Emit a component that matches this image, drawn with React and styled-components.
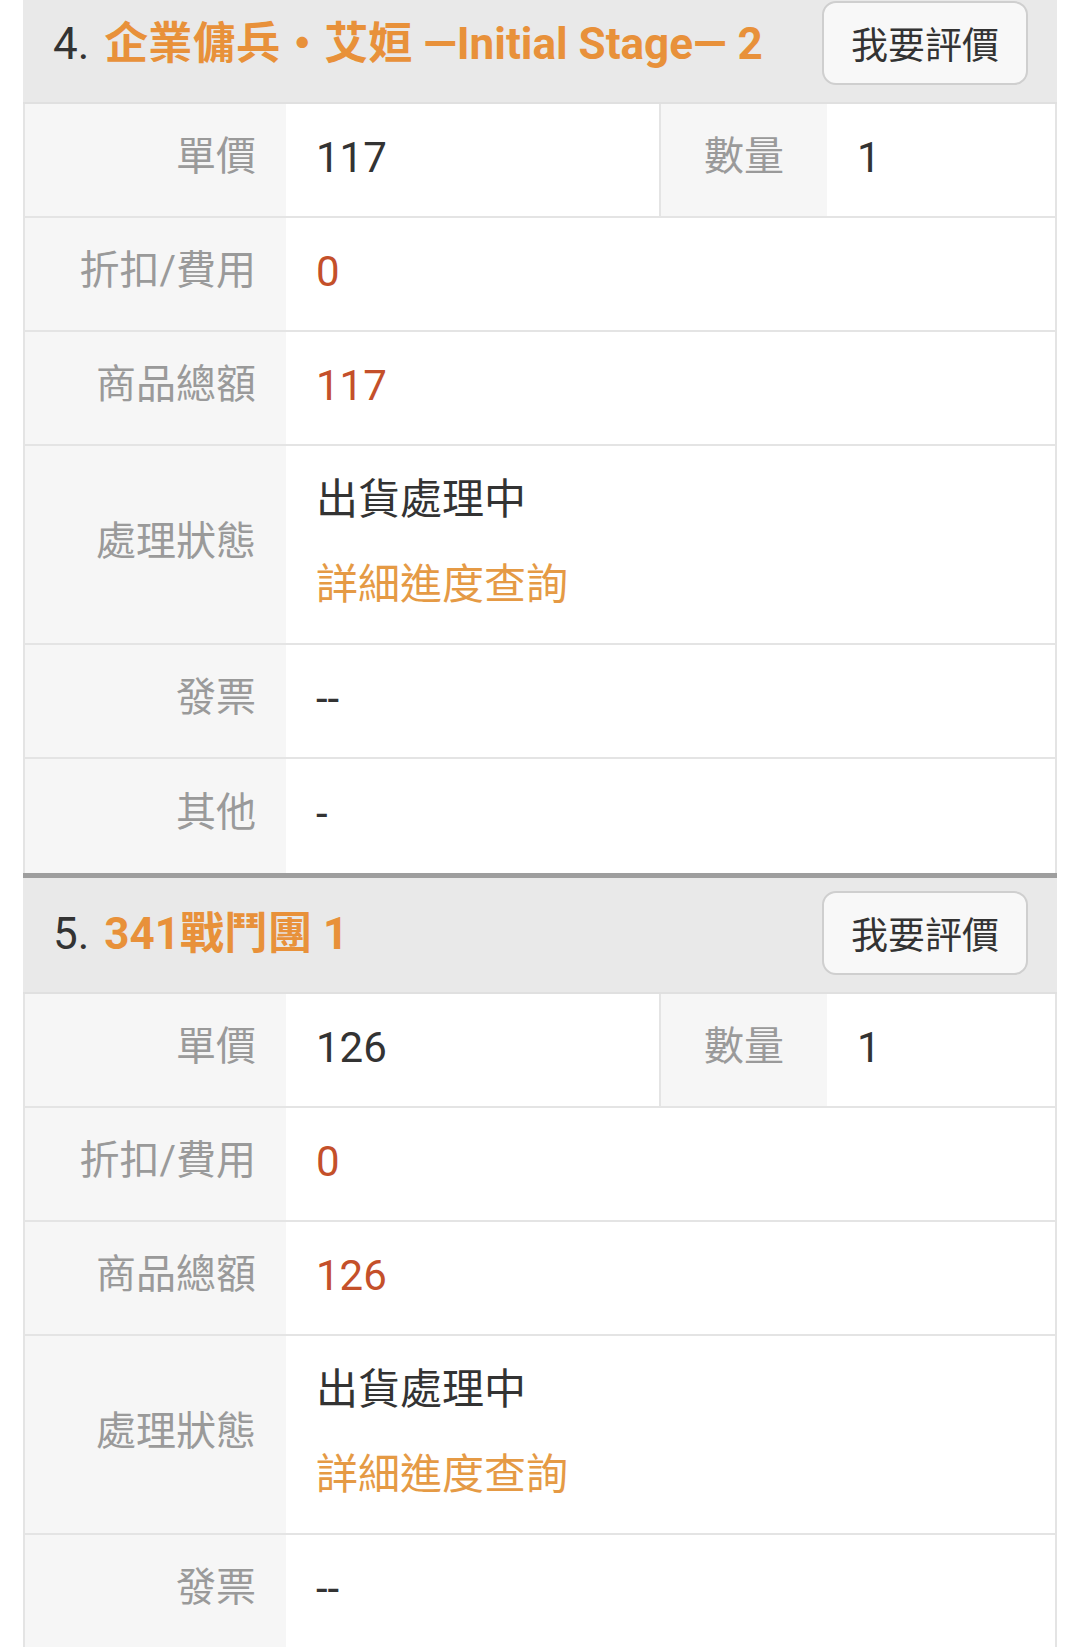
import React from 'react';
import styled, { createGlobalStyle } from 'styled-components';

const GlobalStyle = createGlobalStyle`
  html, body {
    margin: 0;
    padding: 0;
    background: #ffffff;
  }
  body {
    font-family: Roboto, "Noto Sans CJK TC", sans-serif;
    color: #333333;
    overflow: hidden;
  }
`;

const OrderList = styled.div`
  margin: -12px 23px 0;
  border-left: 2px solid #e4e4e4;
  border-right: 2px solid #e4e4e4;
`;

const Item = styled.section`
  border-top: ${(props) => (props.first ? 'none' : '5px solid #9e9e9e')};
  margin: 0 -2px;
  padding: 0 2px;
`;

const Header = styled.div`
  display: flex;
  align-items: center;
  justify-content: space-between;
  height: 114px;
  padding: 0 29px 0 30px;
  background: #e9e9e9;
  border-bottom: 2px solid #e0e0e0;
  margin: 0 -2px;
`;

const Title = styled.div`
  font-size: 44px;
  line-height: 56px;
  color: #333333;
  white-space: nowrap;
  margin-top: -2px;
`;

const Name = styled.span`
  font-weight: 700;
  color: #e8913a;
  margin-left: 4px;
`;

const RateButton = styled.button`
  width: 206px;
  height: 84px;
  border: 2px solid #cfcfcf;
  border-radius: 14px;
  background: #f8f8f8;
  color: #333333;
  font-family: Roboto, "Noto Sans CJK TC", sans-serif;
  font-size: 37px;
  padding: 0;
  margin-top: -4px;
  cursor: pointer;
`;

const Row = styled.div`
  display: grid;
  grid-template-columns: ${(props) => (props.split ? '261px 373px 168px 1fr' : '261px 1fr')};
  border-bottom: ${(props) => (props.last ? 'none' : '2px solid #e4e4e4')};
  min-height: ${(props) => (props.last ? '114px' : '112px')};
`;

const Label = styled.div`
  display: flex;
  align-items: center;
  justify-content: flex-end;
  padding: 0 ${(props) => (props.wide ? '43px' : '30px')} 6px 0;
  background: #f6f6f6;
  color: #9a9a9a;
  font-size: 40px;
  line-height: 60px;
  ${(props) => props.divided && 'border-left: 2px solid #e4e4e4;'}
`;

const Value = styled.div`
  display: flex;
  flex-direction: column;
  justify-content: center;
  gap: 25px;
  padding: 24px 30px 28px;
  font-size: 42px;
  line-height: 60px;
  color: ${(props) => (props.tone === 'red' ? '#c4502a' : '#333333')};
`;

const Link = styled.a`
  color: #e59a45;
  text-decoration: none;
`;

const orders = [
  { no: 4, name: '企業傭兵・艾姮 —Initial Stage— 2', price: 117, qty: 1, other: '-' },
  { no: 5, name: '341戰鬥團 1', price: 126, qty: 1, other: '-' },
];

function OrderItem({ order, first }) {
  return (
    <Item first={first}>
      <Header>
        <Title>
          {order.no}. <Name>{order.name}</Name>
        </Title>
        <RateButton>我要評價</RateButton>
      </Header>
      <Row split>
        <Label>單價</Label>
        <Value>{order.price}</Value>
        <Label divided wide>數量</Label>
        <Value>{order.qty}</Value>
      </Row>
      <Row>
        <Label>折扣/費用</Label>
        <Value tone="red">0</Value>
      </Row>
      <Row>
        <Label>商品總額</Label>
        <Value tone="red">{order.price * order.qty}</Value>
      </Row>
      <Row>
        <Label>處理狀態</Label>
        <Value>
          <span>出貨處理中</span>
          <Link href="#">詳細進度查詢</Link>
        </Value>
      </Row>
      <Row>
        <Label>發票</Label>
        <Value>--</Value>
      </Row>
      <Row last>
        <Label>其他</Label>
        <Value>{order.other}</Value>
      </Row>
    </Item>
  );
}

export default function App() {
  return (
    <>
      <GlobalStyle />
      <OrderList>
        {orders.map((order, i) => (
          <OrderItem key={order.no} order={order} first={i === 0} />
        ))}
      </OrderList>
    </>
  );
}
